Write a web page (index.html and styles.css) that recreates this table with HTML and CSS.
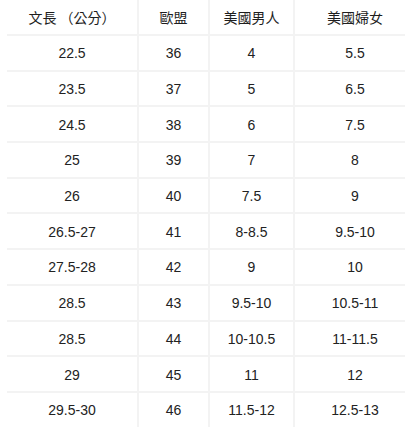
FILE: index.html
```html
<!DOCTYPE html>
<html lang="zh-Hant">
<head>
<meta charset="utf-8">
<link rel="stylesheet" href="styles.css">
</head>
<body>
<div class="size-table">
  <div class="cell head">文長 （公分）</div><div class="cell head">歐盟</div><div class="cell head">美國男人</div><div class="cell head last">美國婦女</div>
  <div class="cell">22.5</div><div class="cell">36</div><div class="cell">4</div><div class="cell last">5.5</div>
  <div class="cell">23.5</div><div class="cell">37</div><div class="cell">5</div><div class="cell last">6.5</div>
  <div class="cell">24.5</div><div class="cell">38</div><div class="cell">6</div><div class="cell last">7.5</div>
  <div class="cell">25</div><div class="cell">39</div><div class="cell">7</div><div class="cell last">8</div>
  <div class="cell">26</div><div class="cell">40</div><div class="cell">7.5</div><div class="cell last">9</div>
  <div class="cell">26.5-27</div><div class="cell">41</div><div class="cell">8-8.5</div><div class="cell last">9.5-10</div>
  <div class="cell">27.5-28</div><div class="cell">42</div><div class="cell">9</div><div class="cell last">10</div>
  <div class="cell">28.5</div><div class="cell">43</div><div class="cell">9.5-10</div><div class="cell last">10.5-11</div>
  <div class="cell">28.5</div><div class="cell">44</div><div class="cell">10-10.5</div><div class="cell last">11-11.5</div>
  <div class="cell">29</div><div class="cell">45</div><div class="cell">11</div><div class="cell last">12</div>
  <div class="cell bottom">29.5-30</div><div class="cell bottom">46</div><div class="cell bottom">11.5-12</div><div class="cell bottom last">12.5-13</div>
</div>
</body>
</html>
```

FILE: styles.css
```css
html, body {
  margin: 0;
  padding: 0;
  background: #ffffff;
}

body {
  font-family: "Liberation Sans", "Noto Sans CJK TC", sans-serif;
  font-size: 14px;
  color: #222222;
}

.size-table {
  display: grid;
  grid-template-columns: 132px 71px 85px 120px;
  grid-template-rows: 36px repeat(10, 35.7px) 34px;
  margin-left: 7px;
}

.cell {
  position: relative;
  box-sizing: border-box;
  display: flex;
  align-items: center;
  justify-content: center;
  border-right: 2px solid #f3f3f3;
  border-bottom: 2px solid #f3f3f3;
  padding-top: 1px;
  white-space: nowrap;
}

.head {
  padding-top: 0;
  font-family: "Noto Sans CJK TC", sans-serif;
  color: #1e1e1e;
}

.cell.last {
  border-right: none;
  border-bottom-color: transparent;
}

.cell.last::after {
  content: "";
  position: absolute;
  left: 0;
  right: 10px;
  bottom: -2px;
  height: 2px;
  background: #f3f3f3;
}

.cell.bottom {
  border-bottom: none;
}

.cell.bottom.last::after {
  display: none;
}
```
